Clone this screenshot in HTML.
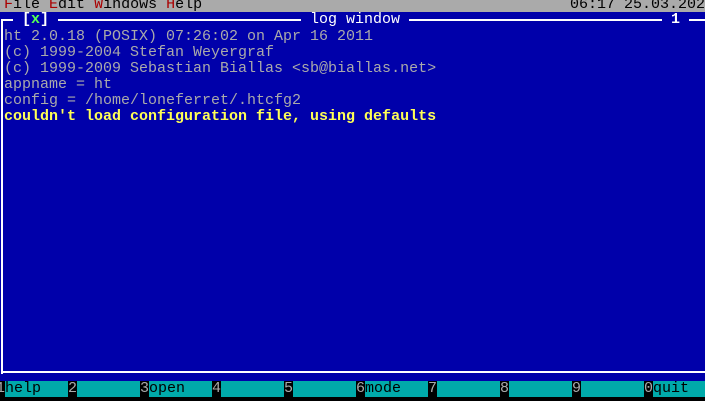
<!DOCTYPE html><html><head><style>
body{margin:0;width:705px;height:401px;background:#000;overflow:hidden;position:relative;font-family:"Liberation Mono",monospace;font-size:15px;}
div{position:absolute;white-space:pre;line-height:16px;}
.t{color:#aaa;}
</style></head><body>
<div style="left:0;top:0;width:705px;height:12px;background:#aaa;"></div>
<div style="left:4px;top:-3px;color:#000;"><span style="color:#a00">F</span>ile <span style="color:#a00">E</span>dit <span style="color:#a00">W</span>indows <span style="color:#a00">H</span>elp</div>
<div style="left:570px;top:-3px;color:#000;">06:17 25.03.202</div>
<div style="left:0;top:12px;width:705px;height:369px;background:#0000aa;"></div>
<div style="left:2px;top:19px;width:703px;height:2px;background:#fff;"></div>
<div style="left:1px;top:19px;width:2px;height:355px;background:#fff;"></div>
<div style="left:2px;top:371px;width:703px;height:2px;background:#fff;"></div>
<div style="left:13px;top:12px;background:#0000aa;color:#fff;font-weight:bold;"> [<span style="color:#5f5">x</span>] </div>
<div style="left:301px;top:12px;background:#0000aa;color:#fff;"> log window </div>
<div style="left:662px;top:12px;background:#0000aa;color:#fff;font-weight:bold;"> 1 </div>
<div class="t" style="left:4px;top:29px;">ht 2.0.18 (POSIX) 07:26:02 on Apr 16 2011
(c) 1999-2004 Stefan Weyergraf
(c) 1999-2009 Sebastian Biallas &lt;sb@biallas.net&gt;
appname = ht
config = /home/loneferret/.htcfg2
<span style="color:#ff5;font-weight:bold">couldn't load configuration file, using defaults</span></div>
<div style="left:0;top:381px;width:705px;height:16px;background:#00aaaa;"></div>
<div style="left:-4px;top:381px;color:#aaa;background:#000;">1</div><div style="left:5px;top:381px;color:#000;">help</div>
<div style="left:68px;top:381px;color:#aaa;background:#000;">2</div>
<div style="left:140px;top:381px;color:#aaa;background:#000;">3</div><div style="left:149px;top:381px;color:#000;">open</div>
<div style="left:212px;top:381px;color:#aaa;background:#000;">4</div>
<div style="left:284px;top:381px;color:#aaa;background:#000;">5</div>
<div style="left:356px;top:381px;color:#aaa;background:#000;">6</div><div style="left:365px;top:381px;color:#000;">mode</div>
<div style="left:428px;top:381px;color:#aaa;background:#000;">7</div>
<div style="left:500px;top:381px;color:#aaa;background:#000;">8</div>
<div style="left:572px;top:381px;color:#aaa;background:#000;">9</div>
<div style="left:644px;top:381px;color:#aaa;background:#000;">0</div><div style="left:653px;top:381px;color:#000;">quit</div>
</body></html>
